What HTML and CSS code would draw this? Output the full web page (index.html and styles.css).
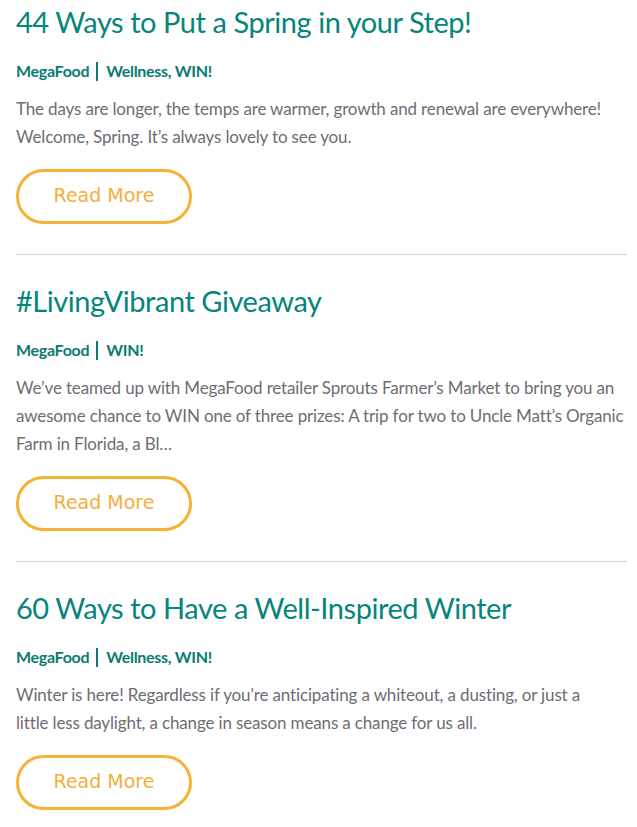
FILE: index.html
```html
<!DOCTYPE html>
<html lang="en">
<head>
    <meta charset="UTF-8">
    <meta name="viewport" content="width=device-width, initial-scale=1.0">
    <title>Blog - MegaFood</title>
    <link rel="stylesheet" href="styles.css">
</head>
<body>
    <main class="posts">
        <article class="post">
            <h2 class="post-title">44 Ways to Put a Spring in your Step!</h2>
            <div class="post-meta">
                <span class="post-author">MegaFood</span>
                <span class="meta-sep"></span>
                <span class="post-cats">Wellness, WIN!</span>
            </div>
            <p class="post-excerpt">The days are longer, the temps are warmer, growth and renewal are everywhere! Welcome, Spring. It’s always lovely to see you.</p>
            <a class="read-more" href="#">Read More</a>
        </article>

        <article class="post">
            <h2 class="post-title">#LivingVibrant Giveaway</h2>
            <div class="post-meta">
                <span class="post-author">MegaFood</span>
                <span class="meta-sep"></span>
                <span class="post-cats">WIN!</span>
            </div>
            <p class="post-excerpt">We’ve teamed up with MegaFood retailer Sprouts Farmer’s Market to bring you an awesome chance to WIN one of three prizes: A trip for two to Uncle Matt’s Organic Farm in Florida, a Bl…</p>
            <a class="read-more" href="#">Read More</a>
        </article>

        <article class="post">
            <h2 class="post-title">60 Ways to Have a Well-Inspired Winter</h2>
            <div class="post-meta">
                <span class="post-author">MegaFood</span>
                <span class="meta-sep"></span>
                <span class="post-cats">Wellness, WIN!</span>
            </div>
            <p class="post-excerpt">Winter is here! Regardless if you’re anticipating a whiteout, a dusting, or just a<br>little less daylight, a change in season means a change for us all.</p>
            <a class="read-more" href="#">Read More</a>
        </article>
    </main>
</body>
</html>
```

FILE: styles.css
```css
body {
    margin: 0;
    padding: 0;
    background: #fff;
    font-family: Lato, "Open Sans", sans-serif;
    color: #6f6c73;
}
.posts {
    padding: 0 10px 0 16px;
}
.post {
    display: flex;
    flex-direction: column;
    align-items: flex-start;
    padding: 28px 0 30px;
    border-bottom: 1px solid #cfcfcf;
}
.post:first-child {
    padding-top: 4px;
}
.post:last-child {
    border-bottom: none;
}
.post-title {
    margin: 0;
    font-size: 29px;
    line-height: 36px;
    font-weight: 400;
    letter-spacing: -0.45px;
    color: #06857b;
}
.post-meta {
    display: flex;
    align-items: center;
    margin-top: 19px;
    font-size: 16px;
    line-height: 24px;
    font-weight: 700;
    letter-spacing: -0.3px;
    color: #0b7b71;
}
.meta-sep {
    width: 2px;
    height: 19px;
    margin: 0 8px 0 7px;
    background: #0b7b71;
}
.post-excerpt {
    margin: 12px 0 0;
    font-size: 17px;
    line-height: 28px;
    letter-spacing: -0.15px;
}
.read-more {
    display: flex;
    align-items: center;
    justify-content: center;
    box-sizing: border-box;
    width: 176px;
    height: 55px;
    margin-top: 18px;
    padding-bottom: 3px;
    border: 3px solid #f6b234;
    border-radius: 28px;
    font-family: "DejaVu Sans", Lato, sans-serif;
    font-size: 19px;
    font-weight: 400;
    color: #f4ae3c;
    text-decoration: none;
}
```
